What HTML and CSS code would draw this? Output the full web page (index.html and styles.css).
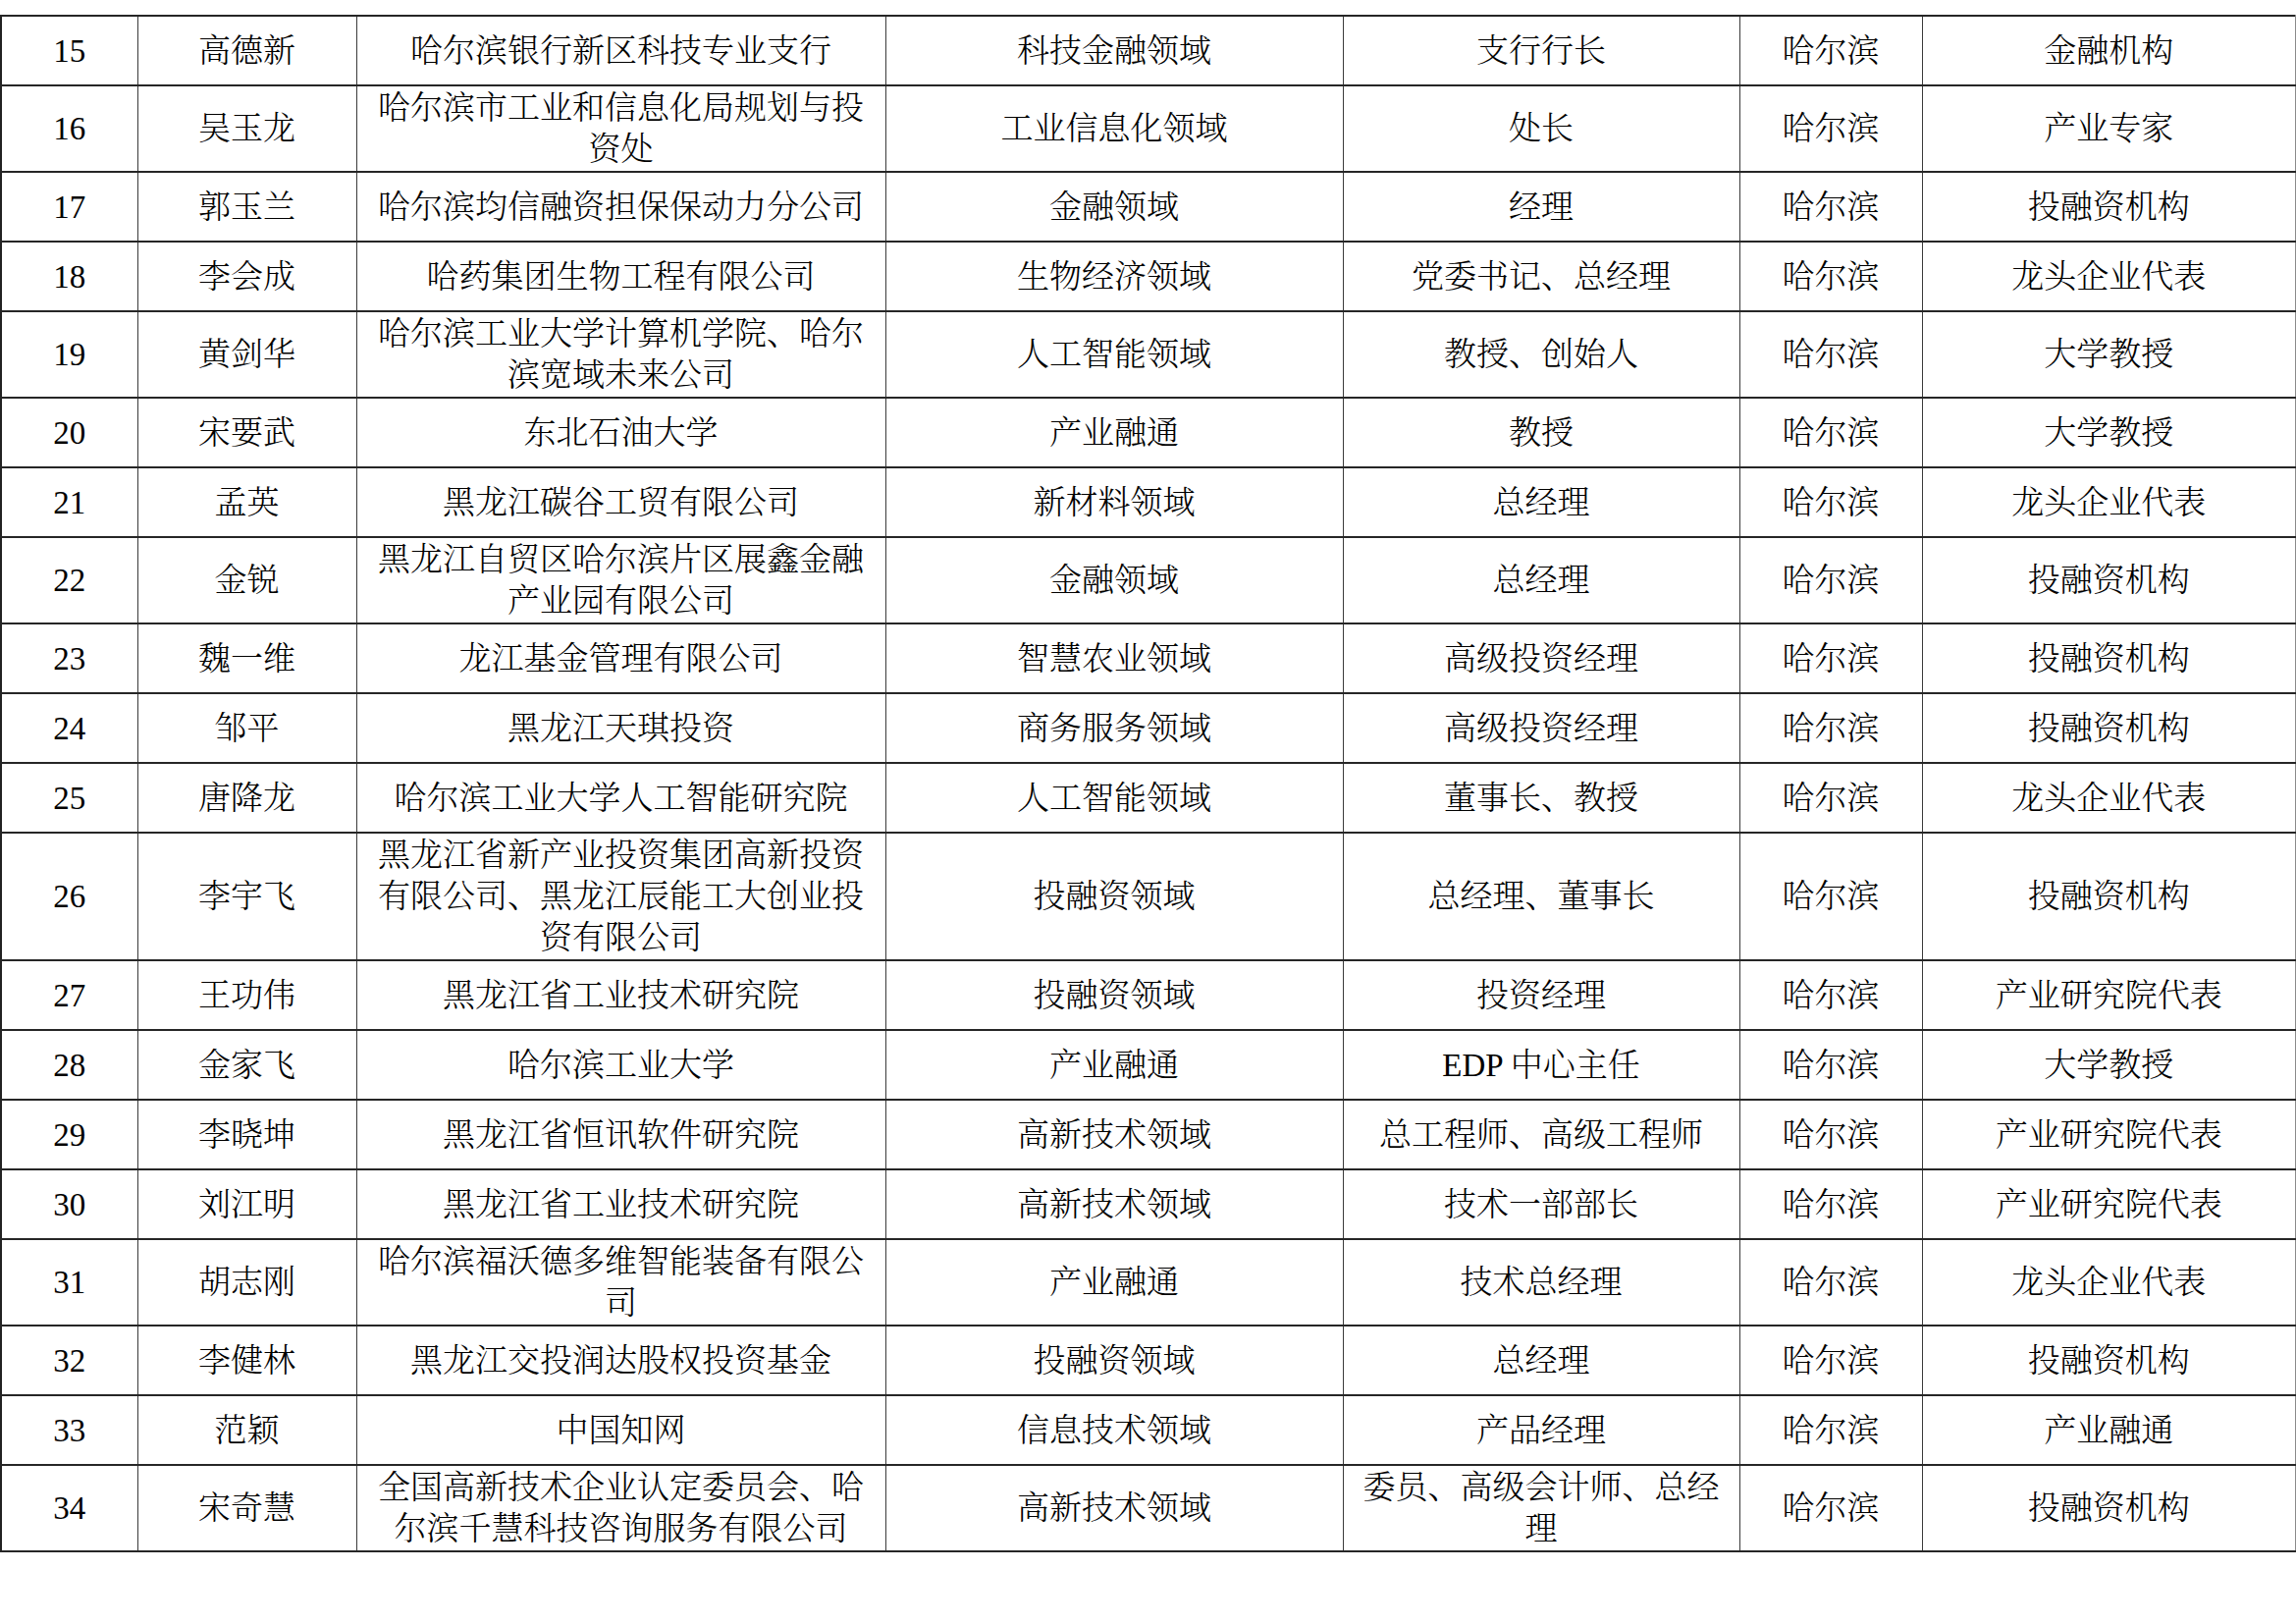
FILE: index.html
```html
<!DOCTYPE html>
<html lang="zh-CN">
<head>
<meta charset="utf-8">
<title>专家名单</title>
<link rel="stylesheet" href="styles.css">
</head>
<body>
<div class="sheet">
<table class="roster">
<colgroup>
<col class="c-no"><col class="c-name"><col class="c-org"><col class="c-field"><col class="c-title"><col class="c-city"><col class="c-type">
</colgroup>
<tbody>
<tr><td>15</td><td>高德新</td><td>哈尔滨银行新区科技专业支行</td><td>科技金融领域</td><td>支行行长</td><td>哈尔滨</td><td>金融机构</td></tr>
<tr><td>16</td><td>吴玉龙</td><td>哈尔滨市工业和信息化局规划与投资处</td><td>工业信息化领域</td><td>处长</td><td>哈尔滨</td><td>产业专家</td></tr>
<tr><td>17</td><td>郭玉兰</td><td>哈尔滨均信融资担保保动力分公司</td><td>金融领域</td><td>经理</td><td>哈尔滨</td><td>投融资机构</td></tr>
<tr><td>18</td><td>李会成</td><td>哈药集团生物工程有限公司</td><td>生物经济领域</td><td>党委书记、总经理</td><td>哈尔滨</td><td>龙头企业代表</td></tr>
<tr><td>19</td><td>黄剑华</td><td>哈尔滨工业大学计算机学院、哈尔滨宽域未来公司</td><td>人工智能领域</td><td>教授、创始人</td><td>哈尔滨</td><td>大学教授</td></tr>
<tr><td>20</td><td>宋要武</td><td>东北石油大学</td><td>产业融通</td><td>教授</td><td>哈尔滨</td><td>大学教授</td></tr>
<tr><td>21</td><td>孟英</td><td>黑龙江碳谷工贸有限公司</td><td>新材料领域</td><td>总经理</td><td>哈尔滨</td><td>龙头企业代表</td></tr>
<tr><td>22</td><td>金锐</td><td>黑龙江自贸区哈尔滨片区展鑫金融产业园有限公司</td><td>金融领域</td><td>总经理</td><td>哈尔滨</td><td>投融资机构</td></tr>
<tr><td>23</td><td>魏一维</td><td>龙江基金管理有限公司</td><td>智慧农业领域</td><td>高级投资经理</td><td>哈尔滨</td><td>投融资机构</td></tr>
<tr><td>24</td><td>邹平</td><td>黑龙江天琪投资</td><td>商务服务领域</td><td>高级投资经理</td><td>哈尔滨</td><td>投融资机构</td></tr>
<tr><td>25</td><td>唐降龙</td><td>哈尔滨工业大学人工智能研究院</td><td>人工智能领域</td><td>董事长、教授</td><td>哈尔滨</td><td>龙头企业代表</td></tr>
<tr><td>26</td><td>李宇飞</td><td>黑龙江省新产业投资集团高新投资有限公司、黑龙江辰能工大创业投资有限公司</td><td>投融资领域</td><td>总经理、董事长</td><td>哈尔滨</td><td>投融资机构</td></tr>
<tr><td>27</td><td>王功伟</td><td>黑龙江省工业技术研究院</td><td>投融资领域</td><td>投资经理</td><td>哈尔滨</td><td>产业研究院代表</td></tr>
<tr><td>28</td><td>金家飞</td><td>哈尔滨工业大学</td><td>产业融通</td><td>EDP 中心主任</td><td>哈尔滨</td><td>大学教授</td></tr>
<tr><td>29</td><td>李晓坤</td><td>黑龙江省恒讯软件研究院</td><td>高新技术领域</td><td>总工程师、高级工程师</td><td>哈尔滨</td><td>产业研究院代表</td></tr>
<tr><td>30</td><td>刘江明</td><td>黑龙江省工业技术研究院</td><td>高新技术领域</td><td>技术一部部长</td><td>哈尔滨</td><td>产业研究院代表</td></tr>
<tr><td>31</td><td>胡志刚</td><td>哈尔滨福沃德多维智能装备有限公司</td><td>产业融通</td><td>技术总经理</td><td>哈尔滨</td><td>龙头企业代表</td></tr>
<tr><td>32</td><td>李健林</td><td>黑龙江交投润达股权投资基金</td><td>投融资领域</td><td>总经理</td><td>哈尔滨</td><td>投融资机构</td></tr>
<tr><td>33</td><td>范颖</td><td>中国知网</td><td>信息技术领域</td><td>产品经理</td><td>哈尔滨</td><td>产业融通</td></tr>
<tr><td>34</td><td>宋奇慧</td><td>全国高新技术企业认定委员会、哈尔滨千慧科技咨询服务有限公司</td><td>高新技术领域</td><td>委员、高级会计师、总经理</td><td>哈尔滨</td><td>投融资机构</td></tr>
</tbody>
</table>
</div>
</body>
</html>
```

FILE: styles.css
```css
html, body {
  margin: 0;
  padding: 0;
  background: #ffffff;
}

.sheet {
  padding-top: 15px;
}

.roster {
  border-collapse: collapse;
  table-layout: fixed;
  width: 2338px;
  font-family: "Liberation Serif", "Noto Serif CJK SC", "Noto Sans CJK SC", serif;
  font-size: 33px;
  font-weight: 300;
  line-height: 42px;
  color: #000000;
}

.c-no { width: 139px; }
.c-name { width: 223px; }
.c-org { width: 539px; }
.c-field { width: 466px; }
.c-title { width: 404px; }
.c-city { width: 186px; }
.c-type { width: 381px; }

.roster tr {
  height: 71px;
}

.roster td {
  padding: 1px 12px;
  text-align: center;
  vertical-align: middle;
  border-top: 2px solid #262626;
  border-bottom: 2px solid #262626;
  border-left: 1px solid #3a3a3a;
  border-right: 1px solid #3a3a3a;
}

.roster td:first-child {
  border-left: 2px solid #222222;
}

.roster td:last-child {
  border-right: 2px solid #8a8a8a;
}
```
